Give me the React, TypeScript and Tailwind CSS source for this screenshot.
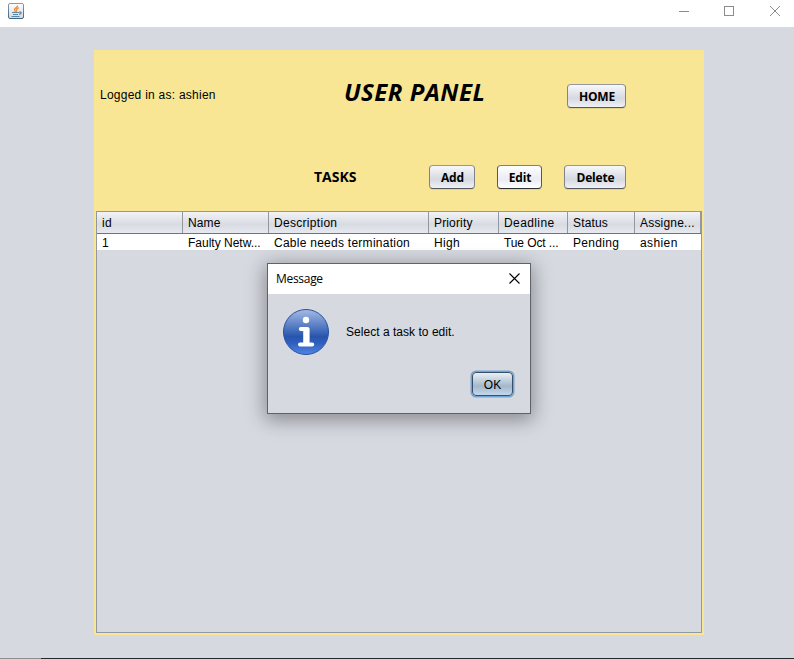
import React from "react";

const arial = "font-['Liberation_Sans',Arial,sans-serif]";
const segoe = "font-['Open_Sans','Noto_Sans',sans-serif]";

function JavaIcon() {
  return (
    <svg width="16" height="16" viewBox="0 0 16 16">
      <defs>
        <linearGradient id="jb" x1="0" y1="0" x2="0" y2="1">
          <stop offset="0" stopColor="#8d9aa6" />
          <stop offset="1" stopColor="#3f6685" />
        </linearGradient>
        <linearGradient id="jf" x1="0" y1="0" x2="0" y2="1">
          <stop offset="0" stopColor="#ffffff" />
          <stop offset="1" stopColor="#cdd9e2" />
        </linearGradient>
      </defs>
      <rect x="0.5" y="0.5" width="15" height="15" rx="1.5" fill="url(#jf)" stroke="url(#jb)" />
      <path d="M9.5 2.5C10 4.5 6.2 5.2 6.5 7C6.7 7.8 7.3 8 7.5 8.7M10.8 4.6C8.2 5.8 8.6 6.5 8.7 7.2C8.8 7.8 8.5 8.2 8 8.6" fill="none" stroke="#ef8a2e" strokeWidth="1.4" />
      <path d="M4 9.5H11M5 11.5H10M3.5 13.5H11.5M11 9.2C13.8 8.4 14 10.7 11 11.5" fill="none" stroke="#5d86a5" strokeWidth="1.2" />
    </svg>
  );
}

function TitleBar() {
  return (
    <header className="flex h-[27px] items-start justify-between bg-white">
      <div className="pl-2 pt-[3px]">
        <JavaIcon />
      </div>
      <svg width="116" height="22" viewBox="0 0 116 22" fill="none" stroke="#8c8c8c">
        <path d="M1 11.5H11" />
        <rect x="46.5" y="6.5" width="9" height="9" />
        <path d="M92 6L102 16M102 6L92 16" />
      </svg>
    </header>
  );
}

function Button({ label, width, hover = false }: { label: string; width: string; hover?: boolean }) {
  const look = hover
    ? "from-[#ffffff] via-[#e9ecf3] to-[#ffffff] border-t-[#7f8084] border-x-[#55585d] border-b-[#2d3035]"
    : "from-[#f7f8fa] via-[#d6d9e0] to-[#eff1f7] border-t-[#969799] border-x-[#808389] border-b-[#54575c]";
  return (
    <button
      className={`${segoe} ${width} ${look} flex h-6 shrink-0 items-center justify-center whitespace-nowrap rounded-[4px] border bg-linear-to-b via-60% pl-px pt-[2px] text-[12px] font-bold tracking-[-0.15px] text-black shadow-[0_1px_0_#e3d48c]`}
    >
      {label}
    </button>
  );
}

const columns = [
  { title: "id", value: "1", width: "w-[86px]", ts: "", vs: "" },
  { title: "Name", value: "Faulty Netw...", width: "w-[86px]", ts: "tracking-[0.1px]", vs: "tracking-[0px]" },
  { title: "Description", value: "Cable needs termination", width: "w-[160px]", ts: "", vs: "tracking-[0.26px]" },
  { title: "Priority", value: "High", width: "w-[70px]", ts: "tracking-[0.15px]", vs: "" },
  { title: "Deadline", value: "Tue Oct ...", width: "w-[69px]", ts: "tracking-[0.4px]", vs: "tracking-[-0.1px]" },
  { title: "Status", value: "Pending", width: "w-[67px]", ts: "tracking-[0.15px]", vs: "" },
  { title: "Assigne...", value: "ashien", width: "w-[66px]", ts: "tracking-[0.2px]", vs: "tracking-[0.4px]" },
];

function TaskTable() {
  return (
    <section className={`${arial} mx-0.5 h-[422px] border border-[#9297a1] bg-[#d6d9e0] text-[12px] tracking-[0.3px]`}>
      <div className="flex h-[22px] border-b border-[#6f737c] bg-linear-to-b from-[#f2f3f6] via-[#d8dbe2] via-60% to-[#e6e9f0]">
        {columns.map((c) => (
          <div key={c.title} className={`${c.width} flex shrink-0 items-center whitespace-nowrap border-r border-[#9297a1] pl-[5px] ${c.ts}`}>
            {c.title}
          </div>
        ))}
      </div>
      <div className="flex h-4 bg-white">
        {columns.map((c) => (
          <div key={c.title} className={`${c.width} shrink-0 whitespace-nowrap pl-[5px] leading-[18px] ${c.vs}`}>
            {c.value}
          </div>
        ))}
      </div>
    </section>
  );
}

function InfoIcon() {
  return (
    <svg width="48" height="48" viewBox="0 0 48 48" className="shrink-0">
      <defs>
        <linearGradient id="info" x1="0" y1="0" x2="0" y2="1">
          <stop offset="0" stopColor="#a5bbe3" />
          <stop offset="0.5" stopColor="#3c67b8" />
          <stop offset="0.6" stopColor="#2854ad" />
          <stop offset="0.75" stopColor="#2f5fbd" />
          <stop offset="1" stopColor="#5186e4" />
        </linearGradient>
      </defs>
      <circle cx="24" cy="24" r="22.5" fill="url(#info)" stroke="#2850a0" />
      <circle cx="24" cy="12" r="3.2" fill="#fff" />
      <path d="M18.8 21H25.5V36M18 36.6H30.2" fill="none" stroke="#fff" strokeWidth="4" strokeLinecap="round" strokeLinejoin="round" />
      <path d="M21.2 20H27.2V37H21.2Z" fill="#fff" />
    </svg>
  );
}

function MessageDialog() {
  return (
    <div className="absolute left-[267px] top-[263px] flex h-[151px] w-[264px] flex-col border border-[#5f6268] bg-[#d6d9e0] shadow-[0_4px_18px_2px_rgba(0,0,0,0.36)]">
      <div className="flex h-[30px] shrink-0 items-center justify-between bg-white pl-2 pr-[10px]">
        <span className={`${segoe} text-[12px] tracking-[-0.3px]`}>Message</span>
        <svg width="11" height="11" viewBox="0 0 11 11" stroke="#000" strokeWidth="1.1" fill="none" className="mb-[2px]">
          <path d="M0.5 0.5L10.5 10.5M10.5 0.5L0.5 10.5" />
        </svg>
      </div>
      <div className="flex items-center pl-[14px] pt-[14px]">
        <InfoIcon />
        <p className={`${arial} ml-4 whitespace-nowrap text-[12px] tracking-[0.03px]`}>Select a task to edit.</p>
      </div>
      <div className="flex justify-end pr-[17px] pt-[16px]">
        <button className={`${arial} flex h-6 w-[41px] items-center justify-center rounded-[4px] border border-[#36506c] bg-linear-to-b from-[#eaf0f5] via-[#a3b8cb] via-60% to-[#c2d8ec] pt-px text-[12px] shadow-[0_0_0_1.5px_#73a4d1]`}>
          OK
        </button>
      </div>
    </div>
  );
}

export default function App() {
  return (
    <div className="relative flex h-[659px] w-[794px] flex-col overflow-hidden bg-[#d6d9e0] text-black">
      <TitleBar />
      <main className="ml-[94px] mt-[23px] h-[585px] w-[610px] bg-[#f8e694]">
        <div className="flex h-[115px] pl-[6px]">
          <p className={`${arial} w-[244px] pt-[36px] text-[12px] leading-[18px] tracking-[0.25px]`}>Logged in as: ashien</p>
          <h1 className={`${segoe} w-[223px] whitespace-nowrap pt-[25px] text-[24px] font-bold italic leading-[34px] tracking-[0.5px]`}>USER PANEL</h1>
          <div className="pt-[34px]">
            <Button label="HOME" width="w-[59px]" />
          </div>
        </div>
        <div className="flex h-[46px] items-start pl-[220px]">
          <h2 className={`${segoe} w-[115px] pt-[3px] text-[14px] font-bold leading-[18px]`}>TASKS</h2>
          <div className="flex gap-[22px]">
            <Button label="Add" width="w-[46px]" />
            <Button label="Edit" width="w-[45px]" hover />
            <Button label="Delete" width="w-[62px]" />
          </div>
        </div>
        <TaskTable />
      </main>
      <MessageDialog />
      <footer className="mt-auto flex h-px">
        <div className="w-[41px] bg-[#8f8f8f]" />
        <div className="flex-1 bg-[#25282c]" />
      </footer>
    </div>
  );
}
